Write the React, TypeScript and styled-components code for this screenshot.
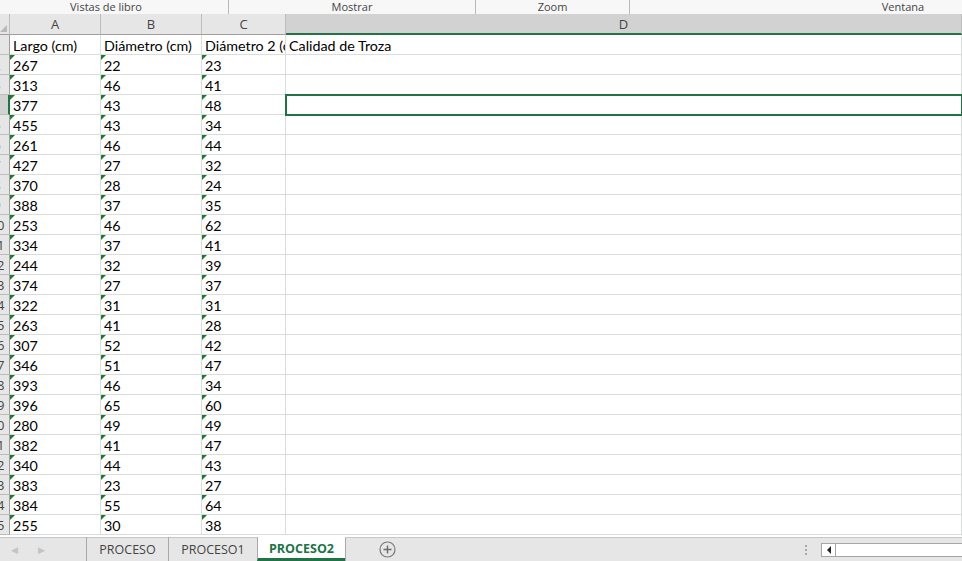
import styled, { createGlobalStyle } from 'styled-components'

const GlobalStyle = createGlobalStyle`
  html, body {
    margin: 0;
    padding: 0;
    background: #ffffff;
    overflow: hidden;
  }
  * { box-sizing: border-box; }
`

const GREEN = '#217346'

const rows: string[][] = [
  ['Largo (cm)', 'Diámetro (cm)', 'Diámetro 2 (cm)', 'Calidad de Troza'],
  ['267', '22', '23'],
  ['313', '46', '41'],
  ['377', '43', '48'],
  ['455', '43', '34'],
  ['261', '46', '44'],
  ['427', '27', '32'],
  ['370', '28', '24'],
  ['388', '37', '35'],
  ['253', '46', '62'],
  ['334', '37', '41'],
  ['244', '32', '39'],
  ['374', '27', '37'],
  ['322', '31', '31'],
  ['263', '41', '28'],
  ['307', '52', '42'],
  ['346', '51', '47'],
  ['393', '46', '34'],
  ['396', '65', '60'],
  ['280', '49', '49'],
  ['382', '41', '47'],
  ['340', '44', '43'],
  ['383', '23', '27'],
  ['384', '55', '64'],
  ['255', '30', '38'],
]

const Page = styled.div`
  width: 962px;
  height: 561px;
  display: flex;
  flex-direction: column;
  overflow: hidden;
  font-family: 'Open Sans', 'Noto Sans', sans-serif;
`

// ribbon group captions, only the bottom strip is in view
const Ribbon = styled.div`
  height: 14px;
  display: grid;
  grid-template-columns: 229px 247px 154px 1fr;
  background: #f7f7f7;
`

const RibbonGroup = styled.div<{ $left?: number; $right?: number }>`
  border-right: 1px solid #b9b9b9;
  font-size: 11px;
  line-height: 13px;
  color: #444;
  text-align: center;
  padding-left: ${p => p.$left ?? 0}px;
  padding-right: ${p => p.$right ?? 0}px;
  white-space: nowrap;
  &:last-child { border-right: none; }
`

const Sheet = styled.div`
  flex: 1;
  overflow: hidden;
  display: grid;
  grid-template-columns: 10px 91px 101px 84px 1fr;
  grid-template-rows: 21px repeat(25, 20px);
  align-content: start;
`

const Corner = styled.div`
  position: relative;
  background: #e6e6e6;
  border-right: 1px solid #bcbcbc;
  border-bottom: 1px solid #9e9e9e;
  &::after {
    content: '';
    position: absolute;
    right: 2px;
    bottom: 2px;
    border-left: 7px solid transparent;
    border-bottom: 7px solid #b8b8b8;
  }
`

const ColHead = styled.div<{ $active?: boolean }>`
  background: ${p => (p.$active ? '#d2d2d2' : '#e6e6e6')};
  border-right: 1px solid #bcbcbc;
  border-bottom: ${p => (p.$active ? `2px solid ${GREEN}` : '1px solid #9e9e9e')};
  color: #444;
  font-size: 13px;
  display: flex;
  align-items: center;
  justify-content: center;
  padding-top: ${p => (p.$active ? 1 : 0)}px;
`

// the row header is scrolled partly out of view: only its right part shows
const RowHead = styled.div<{ $active?: boolean }>`
  background: ${p => (p.$active ? '#d2d2d2' : '#e6e6e6')};
  border-right: ${p => (p.$active ? `2px solid ${GREEN}` : '1px solid #9e9e9e')};
  border-bottom: 1px solid #bcbcbc;
  color: #444;
  font-size: 13px;
  display: flex;
  align-items: center;
  justify-content: flex-end;
  overflow: hidden;
  white-space: nowrap;
`

const RowNum = styled.span`
  flex: none;
  width: 24px;
  text-align: center;
`

const Cell = styled.div<{ $flag?: boolean; $selected?: boolean; $spill?: boolean }>`
  position: relative;
  border-right: 1px solid #dadcdd;
  border-bottom: 1px solid #dadcdd;
  font-family: 'Lato', 'Open Sans', sans-serif;
  font-size: 14.3px;
  color: #000;
  padding: 1px 0 0 3px;
  display: flex;
  align-items: center;
  white-space: nowrap;
  overflow: ${p => (p.$spill ? 'visible' : 'hidden')};
  ${p =>
    p.$selected &&
    `
    outline: 2px solid ${GREEN};
    outline-offset: -1px;
    z-index: 2;
  `}
  ${p =>
    p.$flag &&
    `
    &::before {
      content: '';
      position: absolute;
      left: 0;
      top: 0;
      border-top: 5px solid #1e7a2e;
      border-right: 5px solid transparent;
    }
  `}
`

const TabBar = styled.div`
  height: 24px;
  background: #e6e6e6;
  border-top: 1px solid #c6c6c6;
  display: flex;
  align-items: stretch;
  font-family: 'Open Sans', 'Noto Sans', sans-serif;
`

const NavArea = styled.div`
  width: 86px;
  display: flex;
  align-items: center;
  gap: 20px;
  padding-left: 11px;
  color: #c4c4c4;
  font-size: 9px;
`

const Tab = styled.div<{ $active?: boolean; $w: number }>`
  width: ${p => p.$w}px;
  display: flex;
  align-items: center;
  justify-content: center;
  border-left: 1px solid #a9a9a9;
  font-size: 12.5px;
  color: ${p => (p.$active ? GREEN : '#444')};
  font-weight: ${p => (p.$active ? 700 : 400)};
  background: ${p => (p.$active ? '#ffffff' : 'transparent')};
  border-bottom: ${p => (p.$active ? `3px solid ${GREEN}` : 'none')};
  padding-top: ${p => (p.$active ? 2 : 0)}px;
  margin-top: -1px;
`

const AddButton = styled.div`
  width: 83px;
  border-left: 1px solid #a9a9a9;
  display: flex;
  align-items: center;
  justify-content: center;
`

const Spacer = styled.div`
  flex: 1;
`

const Grip = styled.div`
  width: 3px;
  display: flex;
  flex-direction: column;
  justify-content: center;
  gap: 2px;
  margin-right: 13px;
  span {
    width: 2px;
    height: 2px;
    background: #a8a8a8;
  }
`

const HScroll = styled.div`
  align-self: center;
  width: 145px;
  height: 14px;
  margin-right: -4px;
  border: 1px solid #a6a6a6;
  background: #ffffff;
  display: flex;
`

const ScrollBtn = styled.div`
  width: 14px;
  border-right: 1px solid #a6a6a6;
  display: flex;
  align-items: center;
  justify-content: center;
  &::after {
    content: '';
    border-right: 4px solid #222;
    border-top: 4px solid transparent;
    border-bottom: 4px solid transparent;
  }
`

const PlusIcon = () => (
  <svg width="17" height="17" viewBox="0 0 17 17">
    <circle cx="8.5" cy="8.5" r="7.5" fill="none" stroke="#7a7a7a" strokeWidth="1.2" />
    <path d="M8.5 4.5v8M4.5 8.5h8" stroke="#6a6a6a" strokeWidth="1.4" />
  </svg>
)

export default function App() {
  const selectedRow = 4
  const cols = ['A', 'B', 'C', 'D']

  return (
    <>
      <GlobalStyle />
      <Page>
        <Ribbon>
          <RibbonGroup $right={16}>Vistas de libro</RibbonGroup>
          <RibbonGroup>Mostrar</RibbonGroup>
          <RibbonGroup>Zoom</RibbonGroup>
          <RibbonGroup $left={214}>Ventana</RibbonGroup>
        </Ribbon>

        <Sheet>
          <Corner />
          {cols.map(c => (
            <ColHead key={c} $active={c === 'D'}>{c}</ColHead>
          ))}

          {rows.map((r, i) => {
            const n = i + 1
            return [
              <RowHead key={'h' + n} $active={n === selectedRow}>
                <RowNum>{n}</RowNum>
              </RowHead>,
              ...[0, 1, 2, 3].map(ci => (
                <Cell
                  key={n + '-' + ci}
                  $flag={n > 1 && ci < 3}
                  $selected={n === selectedRow && ci === 3}
                  $spill={n === 1 && ci === 3}
                >
                  {r[ci] ?? ''}
                </Cell>
              )),
            ]
          })}
        </Sheet>

        <TabBar>
          <NavArea>
            <span>◀</span>
            <span>▶</span>
          </NavArea>
          <Tab $w={82}>PROCESO</Tab>
          <Tab $w={89}>PROCESO1</Tab>
          <Tab $w={88} $active>PROCESO2</Tab>
          <AddButton>
            <PlusIcon />
          </AddButton>
          <Spacer />
          <Grip>
            <span />
            <span />
            <span />
          </Grip>
          <HScroll>
            <ScrollBtn />
          </HScroll>
        </TabBar>
      </Page>
    </>
  )
}
